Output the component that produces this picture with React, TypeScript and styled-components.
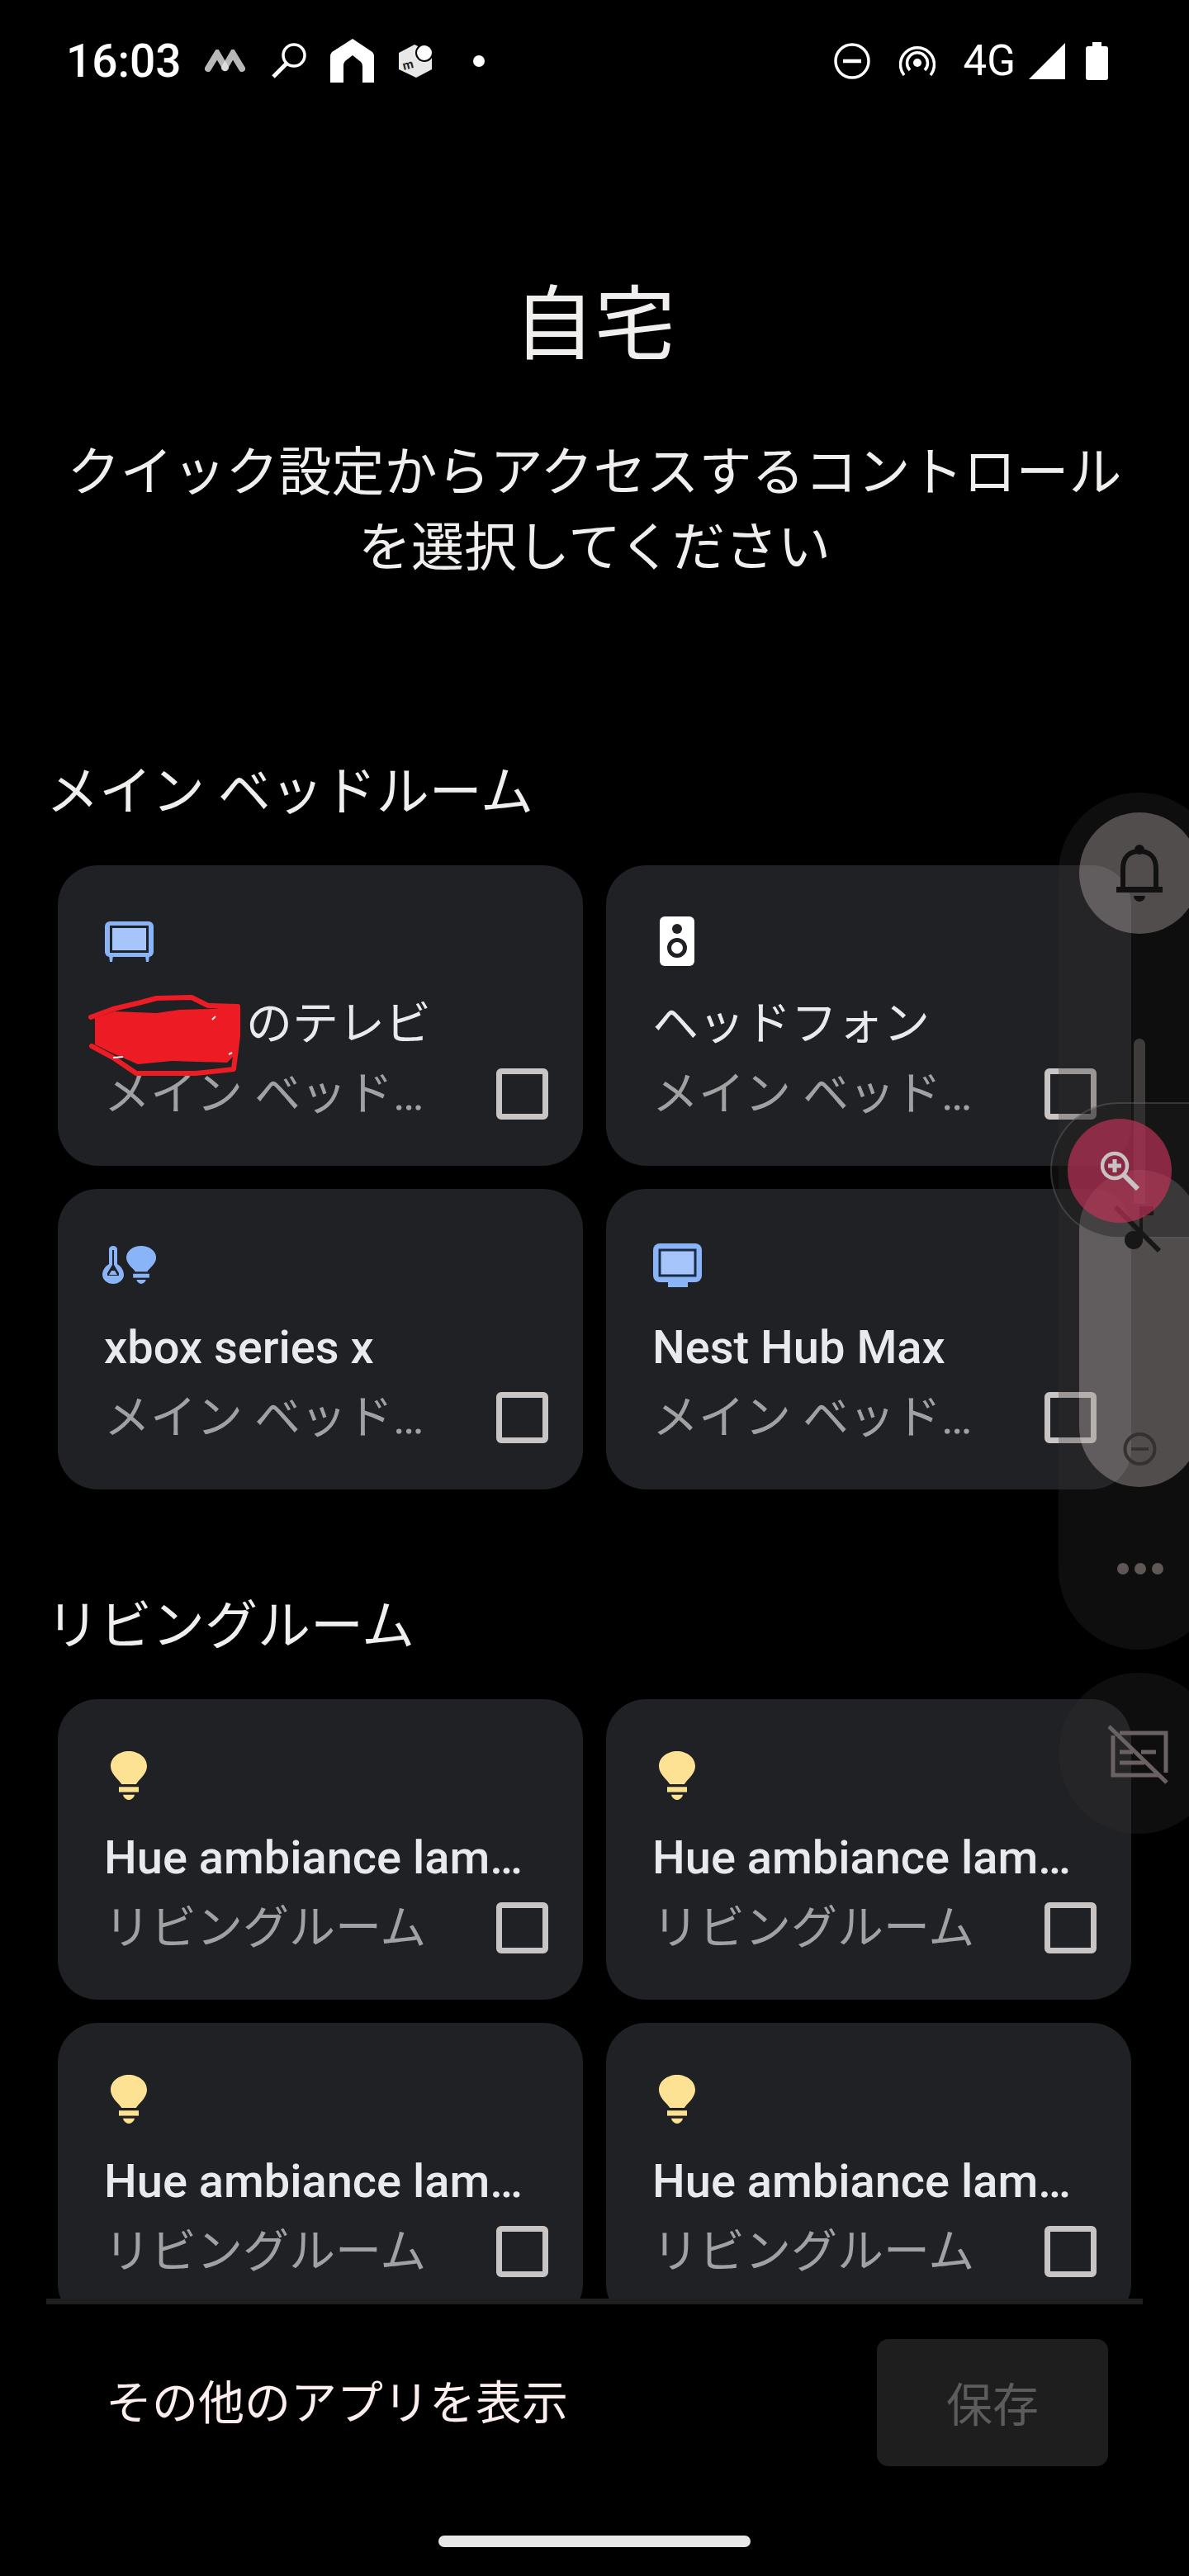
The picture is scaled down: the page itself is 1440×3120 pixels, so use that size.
import {ReactNode} from "react";
import styled, {createGlobalStyle} from "styled-components";

const GlobalStyle = createGlobalStyle`
  html, body {
    margin: 0;
    padding: 0;
    background: #000;
  }
  * {
    box-sizing: border-box;
  }
`;

const FONT = `Roboto, "Noto Sans CJK JP", sans-serif`;

const Screen = styled.div`
  position: relative;
  width: 1440px;
  height: 3120px;
  overflow: hidden;
  background: #000;
  color: #f1eeee;
  font-family: ${FONT};
`;

const StatusBar = styled.div`
  height: 147px;
  padding: 0 98px 0 80px;
  display: flex;
  align-items: center;
  justify-content: space-between;
`;

const StatusGroup = styled.div`
  display: flex;
  align-items: center;
`;

const Clock = styled.span`
  font-size: 55px;
  font-weight: 500;
  line-height: 54px;
  width: 168px;
  color: #fff;
`;

const StatusSlot = styled.span<{ $gap: number }>`
  display: flex;
  margin-left: ${p => p.$gap}px;
`;

const NotificationDot = styled.span`
  width: 14px;
  height: 14px;
  margin-left: 47px;
  border-radius: 50%;
  background: #fff;
`;

const NetworkLabel = styled.span`
  margin-left: 34px;
  font-size: 51px;
  line-height: 50px;
  color: #fff;
`;

const ScrollArea = styled.div`
  height: 2637px;
  overflow: hidden;
`;

const Title = styled.h1`
  margin: 192px 0 0;
  font-size: 98px;
  line-height: 110px;
  font-weight: 400;
  text-align: center;
`;

const Subtitle = styled.p`
  width: 1300px;
  margin: 78px auto 0;
  font-size: 64px;
  line-height: 91px;
  font-weight: 400;
  text-align: center;
`;

const Section = styled.section`
  padding: 0 70px 0 56px;
  margin-top: 121px;

  &:first-of-type {
    margin-top: 206px;
  }
`;

const SectionTitle = styled.h2`
  margin: 0 0 43px;
  font-size: 64px;
  line-height: 90px;
  font-weight: 400;
`;

const Grid = styled.div`
  margin-left: 14px;
  display: grid;
  grid-template-columns: 636px 636px;
  grid-auto-rows: 364px;
  gap: 28px;
`;

const Card = styled.div`
  padding: 56px 42px 0 56px;
  border-radius: 48px;
  background: #202124;
`;

const IconSlot = styled.div`
  width: 60px;
  height: 72px;
  display: flex;
  align-items: center;
  justify-content: center;

  svg {
    flex: none;
  }
`;

const CardTitle = styled.div<{ $latin?: boolean }>`
  margin-top: 24px;
  height: 80px;
  font-size: 56px;
  line-height: 80px;
  color: #e8eaed;
  white-space: nowrap;
  ${p => p.$latin && `
    max-width: 530px;
    font-weight: 500;
    overflow: hidden;
    text-overflow: ellipsis;
  `}
`;

const Redacted = styled.span`
  position: relative;
  display: inline-block;
  width: 172px;
  height: 1px;
`;

const Scribble = styled.svg`
  position: absolute;
  left: -19px;
  top: -53px;
`;

const CardMeta = styled.div`
  height: 90px;
  display: flex;
  align-items: center;
  justify-content: space-between;
`;

const CardSubtitle = styled.span`
  width: 400px;
  font-size: 56px;
  line-height: 80px;
  color: #a0a1a3;
  white-space: nowrap;
  overflow: hidden;
  text-overflow: ellipsis;
`;

const Checkbox = styled.span`
  flex: none;
  width: 63px;
  height: 62px;
  border: 7px solid #c9c5c4;
  border-radius: 6px;
`;

const Footer = styled.div`
  position: relative;
  height: 336px;
  border-top: 7px solid #1f1f1f;
  margin: 0 56px;
`;

const FooterRow = styled.div`
  padding: 42px 42px 0 72px;
  display: flex;
  align-items: center;
  justify-content: space-between;
`;

const MoreApps = styled.span`
  padding-top: 2px;
  font-size: 56px;
  line-height: 80px;
  color: #fbeeec;
`;

const SaveButton = styled.button`
  width: 280px;
  height: 154px;
  padding: 0 0 4px;
  border: none;
  border-radius: 14px;
  background: #1e1e1e;
  color: #5c5c5c;
  font-family: ${FONT};
  font-size: 56px;
`;

const HomeIndicator = styled.div`
  width: 378px;
  height: 14px;
  margin: 84px auto 0;
  border-radius: 7px;
  background: #e8e8e8;
`;

/* volume panel and magnifier floating over the list */
const Panel = styled.div`
  position: absolute;
  left: 1282px;
  top: 960px;
  width: 194px;
  height: 1038px;
  border-radius: 97px;
  background: rgba(48, 46, 46, 0.31);
`;

const CaptionButton = styled.div`
  position: absolute;
  left: 1282px;
  top: 2026px;
  width: 194px;
  height: 195px;
  border-radius: 50%;
  background: rgba(48, 46, 46, 0.31);
`;

const RingerButton = styled.div`
  position: absolute;
  left: 1307px;
  top: 984px;
  width: 146px;
  height: 147px;
  border-radius: 50%;
  background: rgba(255, 240, 240, 0.28);
`;

const SliderTrack = styled.div`
  position: absolute;
  left: 1373px;
  top: 1258px;
  width: 14px;
  height: 200px;
  border-radius: 7px 7px 0 0;
  background: rgba(255, 240, 240, 0.2);
`;

const SliderFill = styled.div`
  position: absolute;
  left: 1307px;
  top: 1417px;
  width: 146px;
  height: 384px;
  border-radius: 73px;
  background: rgba(255, 240, 240, 0.28);
`;

const ZoomPill = styled.div`
  position: absolute;
  left: 1272px;
  top: 1335px;
  width: 300px;
  height: 165px;
  border-radius: 83px;
  border: 2px solid rgba(255, 255, 255, 0.14);
  background: rgba(30, 30, 30, 0.45);
`;

const ZoomButton = styled.div`
  position: absolute;
  left: 1293px;
  top: 1355px;
  width: 126px;
  height: 126px;
  border-radius: 50%;
  background: rgba(200, 50, 90, 0.65);
`;

const FloatIcon = styled.svg<{ $x: number; $y: number }>`
  position: absolute;
  left: ${p => p.$x}px;
  top: ${p => p.$y}px;
`;

const DotRow = styled.div`
  position: absolute;
  left: 1353px;
  top: 1893px;
  width: 56px;
  display: flex;
  justify-content: space-between;
`;

const MoreDot = styled.span`
  width: 14px;
  height: 14px;
  border-radius: 50%;
  background: #5f5656;
`;

const TvIcon = () => (
    <svg width="59" height="49" viewBox="0 0 59 49">
        <path d="M5 41h5l-1 8H6zM49 41h5l-1 8h-3z" fill="#8ab4f8"/>
        <rect width="59" height="43" rx="6" fill="#8ab4f8"/>
        <rect x="7.5" y="6.5" width="44" height="30" fill="#a6c6fb" stroke="#202124" strokeWidth="3"/>
    </svg>
);

const SpeakerIcon = () => (
    <svg width="42" height="60" viewBox="0 0 42 60">
        <rect width="42" height="60" rx="6" fill="#fff"/>
        <circle cx="21" cy="15" r="6" fill="#202124"/>
        <circle cx="21" cy="38" r="9.5" fill="none" stroke="#202124" strokeWidth="5"/>
    </svg>
);

const HubIcon = () => (
    <svg width="59" height="53" viewBox="0 0 59 53">
        <rect x="18" y="40" width="24" height="13" fill="#8ab4f8"/>
        <rect width="59" height="47" rx="8" fill="#8ab4f8"/>
        <rect x="8" y="8" width="43" height="31" fill="#a6c6fb" stroke="#1b2a45" strokeWidth="3"/>
    </svg>
);

const Bulb = ({color}: { color: string }) => (
    <>
        <path d="M22 0C10 0 0 10 0 23c0 10 6 17 11 24 1 2 2 3 2 4h18c0-1 1-2 2-4 5-7 11-14 11-24C44 10 34 0 22 0z" fill={color}/>
        <rect x="10" y="55" width="24" height="8" fill={color}/>
        <path d="M15 67h14c-1 5-4 8-7 8s-6-3-7-8z" fill={color}/>
    </>
);

const BulbIcon = () => (
    <svg width="44" height="59" viewBox="0 0 44 75" preserveAspectRatio="none">
        <Bulb color="#fde293"/>
    </svg>
);

const SensorIcon = () => (
    <svg width="65" height="46" viewBox="0 0 65 46">
        <path d="M8 4a5 4 0 0 1 10 0v18c5 3 8 8 8 13 0 6-6 11-13 11S0 41 0 35c0-5 3-10 8-13z" fill="#8ab4f8"/>
        <path d="M12 5h2v18l6 10v3H6v-3l6-10z" fill="#202124"/>
        <path d="M11 30h4l3 5H8z" fill="#8ab4f8"/>
        <g transform="translate(29 0) scale(0.82 0.613)">
            <Bulb color="#8ab4f8"/>
        </g>
    </svg>
);

const TvName = () => (
    <>
        <Redacted>
            <Scribble width="186" height="100" viewBox="0 0 186 100">
                <path d="M8 28L31 20 83 22 110 18 150 17 178 14 180 70 168 82 101 80 60 84 28 70 8 60Z" fill="#ed1c24"/>
                <path
                    d="M3 27L30 17 60 10 83 4 125 3 145 13 181 14 181 50 176 90 130 95 95 95 58 95 30 76 4 62"
                    fill="none" stroke="#ed1c24" strokeWidth="6" strokeLinejoin="round" strokeLinecap="round"/>
                <path d="M100 92L112 80 122 92Z M60 84L80 90 95 84Z" fill="#202124"/>
                <path d="M30 76L42 75M150 30L154 26M170 72L174 70" stroke="#f4f0f0" strokeWidth="2"/>
            </Scribble>
        </Redacted>
        のテレビ
    </>
);

type Device = {
    name: ReactNode;
    room: string;
    icon: ReactNode;
    latin?: boolean;
};

const bedroom: Device[] = [
    {name: <TvName/>, room: "メイン ベッドルーム", icon: <TvIcon/>},
    {name: "ヘッドフォン", room: "メイン ベッドルーム", icon: <SpeakerIcon/>},
    {name: "xbox series x", room: "メイン ベッドルーム", icon: <SensorIcon/>, latin: true},
    {name: "Nest Hub Max", room: "メイン ベッドルーム", icon: <HubIcon/>, latin: true},
];

const living: Device[] = [1, 2, 3, 4].map(n => ({
    name: `Hue ambiance lamp ${n}`,
    room: "リビングルーム",
    icon: <BulbIcon/>,
    latin: true,
}));

const DeviceCard = ({device}: { device: Device }) => (
    <Card>
        <IconSlot>{device.icon}</IconSlot>
        <CardTitle $latin={device.latin}>{device.name}</CardTitle>
        <CardMeta>
            <CardSubtitle>{device.room}</CardSubtitle>
            <Checkbox/>
        </CardMeta>
    </Card>
);

function App() {
    return (
        <Screen>
            <GlobalStyle/>
            <StatusBar>
                <StatusGroup>
                    <Clock>16:03</Clock>
                    <svg width="49" height="27" viewBox="0 0 49 27">
                        <g fill="none" stroke="#e6e6e6" strokeOpacity="0.8" strokeWidth="8" strokeLinecap="round">
                            <path d="M4 23L15 5 25 22"/>
                            <path d="M24 22L34 5 45 23"/>
                        </g>
                    </svg>
                    <StatusSlot $gap={31}>
                        <svg width="44" height="43" viewBox="0 0 44 43">
                            <circle cx="28" cy="15" r="13" fill="none" stroke="#fff" strokeWidth="3.5"/>
                            <path d="M19 25L3 41" stroke="#fff" strokeWidth="5"/>
                        </svg>
                    </StatusSlot>
                    <StatusSlot $gap={28}>
                        <svg width="53" height="53" viewBox="0 0 53 53">
                            <path
                                d="M27 0L51 16Q53 18 53 22V53H39V33Q39 30 37 28L27 20 18 27Q16 29 16 33V53H0V22Q0 18 2 16Z"
                                fill="#fff"/>
                        </svg>
                    </StatusSlot>
                    <StatusSlot $gap={30}>
                        <svg width="43" height="40" viewBox="0 0 43 40">
                            <path d="M0 10L19 0 40 10V30L21 40 0 30Z" fill="#e8e8e8"/>
                            <circle cx="31" cy="10" r="11" fill="#000"/>
                            <circle cx="31" cy="10" r="9" fill="#fff"/>
                            <text x="5" y="30" fontSize="15" fontFamily="Roboto" fontWeight="700" fill="#222"
                                  transform="rotate(-14 10 26)">m
                            </text>
                        </svg>
                    </StatusSlot>
                    <NotificationDot/>
                </StatusGroup>
                <StatusGroup>
                    <svg width="44" height="44" viewBox="0 0 44 44">
                        <circle cx="22" cy="22" r="20" fill="none" stroke="#fff" strokeWidth="3.5"/>
                        <path d="M11 22H33" stroke="#fff" strokeWidth="4.5"/>
                    </svg>
                    <StatusSlot $gap={35}>
                        <svg width="44" height="37" viewBox="0 0 44 37">
                            <circle cx="22" cy="21" r="5" fill="#fff"/>
                            <g fill="none" stroke="#fff" strokeWidth="3.5">
                                <path d="M13 30A12.500 12.500 0 1 1 31 30"/>
                                <path d="M6 36A20.500 20.500 0 1 1 38 36"/>
                            </g>
                        </svg>
                    </StatusSlot>
                    <NetworkLabel>4G</NetworkLabel>
                    <StatusSlot $gap={16}>
                        <svg width="44" height="44" viewBox="0 0 44 44">
                            <path d="M44 0V44H0Z" fill="#fff"/>
                        </svg>
                    </StatusSlot>
                    <StatusSlot $gap={25}>
                        <svg width="27" height="46" viewBox="0 0 27 46">
                            <rect x="8" width="11" height="6" fill="#fff"/>
                            <rect y="5" width="27" height="41" rx="3" fill="#fff"/>
                        </svg>
                    </StatusSlot>
                </StatusGroup>
            </StatusBar>

            <ScrollArea>
                <Title>自宅</Title>
                <Subtitle>クイック設定からアクセスするコントロールを選択してください</Subtitle>
                <Section>
                    <SectionTitle>メイン ベッドルーム</SectionTitle>
                    <Grid>
                        {bedroom.map((d, i) => <DeviceCard key={i} device={d}/>)}
                    </Grid>
                </Section>
                <Section>
                    <SectionTitle>リビングルーム</SectionTitle>
                    <Grid>
                        {living.map((d, i) => <DeviceCard key={i} device={d}/>)}
                    </Grid>
                </Section>
            </ScrollArea>

            <Footer>
                <FooterRow>
                    <MoreApps>その他のアプリを表示</MoreApps>
                    <SaveButton>保存</SaveButton>
                </FooterRow>
                <HomeIndicator/>
            </Footer>

            <Panel/>
            <CaptionButton/>
            <RingerButton/>
            <SliderTrack/>
            <SliderFill/>
            <ZoomPill/>
            <FloatIcon $x={1352} $y={1023} width="56" height="69" viewBox="0 0 56 69">
                <circle cx="28" cy="6" r="6" fill="#111"/>
                <path d="M8 51V29C8 15 16 8 28 8 40 8 48 15 48 29V51" fill="none" stroke="#111" strokeWidth="6"/>
                <rect y="51" width="56" height="7" fill="#111"/>
                <path d="M21 62H35A7 7 0 0 1 21 62Z" fill="#111"/>
            </FloatIcon>
            <FloatIcon $x={1348} $y={1458} width="60" height="60" viewBox="0 0 60 60">
                <circle cx="25" cy="44" r="11" fill="#171717"/>
                <path d="M34 44V6" stroke="#171717" strokeWidth="4"/>
                <rect x="32" y="3" width="17" height="11" fill="#171717"/>
                <path d="M3 4L56 57" stroke="#171717" strokeWidth="6"/>
            </FloatIcon>
            <FloatIcon $x={1360} $y={1735} width="41" height="40" viewBox="0 0 41 40">
                <circle cx="20.500" cy="20" r="18" fill="none" stroke="#353131" strokeWidth="4"/>
                <path d="M10 20H31" stroke="#353131" strokeWidth="3.500"/>
            </FloatIcon>
            <DotRow>
                <MoreDot/>
                <MoreDot/>
                <MoreDot/>
            </DotRow>
            <FloatIcon $x={1342} $y={2089} width="74" height="72" viewBox="0 0 74 72">
                <g fill="none" stroke="#6a6262" strokeWidth="5">
                    <path d="M14 10H70V58M62 61H6V13"/>
                    <path d="M14 33H30M40 33H58M14 46H44"/>
                    <path d="M1 2L71 70"/>
                </g>
            </FloatIcon>
            <ZoomButton/>
            <FloatIcon $x={1333} $y={1394} width="48" height="48" viewBox="0 0 48 48">
                <circle cx="17" cy="18" r="15" fill="none" stroke="#c9c2c4" strokeWidth="4.500"/>
                <path d="M17 10V26M9 18H25" stroke="#c9c2c4" strokeWidth="5"/>
                <path d="M28 29L45 46" stroke="#c9c2c4" strokeWidth="6"/>
            </FloatIcon>
        </Screen>
    );
}

export default App;
